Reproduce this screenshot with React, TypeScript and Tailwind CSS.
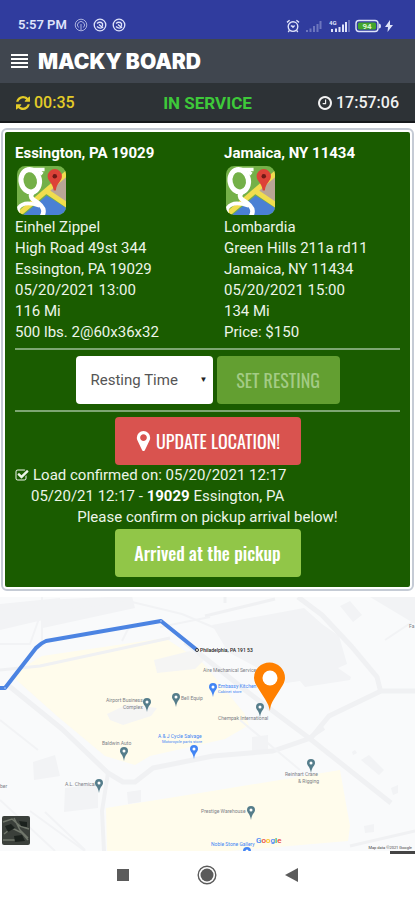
import React from 'react';

interface Stop {
    place: string;
    lines: string[];
}

const stops: Stop[] = [
    {
        place: 'Essington, PA 19029',
        lines: ['Einhel Zippel', 'High Road 49st 344', 'Essington, PA 19029', '05/20/2021 13:00', '116 Mi', '500 lbs. 2@60x36x32'],
    },
    {
        place: 'Jamaica, NY 11434',
        lines: ['Lombardia', 'Green Hills 211a rd11', 'Jamaica, NY 11434', '05/20/2021 15:00', '134 Mi', 'Price: $150'],
    },
];

const ICONS = {
    refresh: 'M1511 1056q0 5-1 7-64 268-268 434.5t-478 166.5q-146 0-282.5-55t-243.5-157l-129 129q-19 19-45 19t-45-19-19-45v-448q0-26 19-45t45-19h448q26 0 45 19t19 45-19 45l-137 137q71 66 161 102t187 36q134 0 250-65t186-179q11-17 53-117 8-23 30-23h192q13 0 22.5 9.5t9.5 22.5zm25-800v448q0 26-19 45t-45 19h-448q-26 0-45-19t-19-45 19-45l138-138q-148-137-349-137-134 0-250 65t-186 179q-11 17-53 117-8 23-30 23h-199q-13 0-22.5-9.5t-9.5-22.5v-7q65-268 270-434.5t480-166.5q146 0 284 55.5t245 156.5l130-129q19-19 45-19t45 19 19 45z',
    clock: 'M896 544v448q0 14-9 23t-23 9h-320q-14 0-23-9t-9-23v-64q0-14 9-23t23-9h224v-352q0-14 9-23t23-9h64q14 0 23 9t9 23zm416 352q0-148-73-273t-198-198-273-73-273 73-198 198-73 273 73 273 198 198 273 73 273-73 198-198 73-273zm224 0q0 209-103 385.5t-279.5 279.5-385.5 103-385.5-103-279.5-279.5-103-385.5 103-385.5 279.5-279.5 385.5-103 385.5 103 279.5 279.5 103 385.5z',
    marker: 'M1152 640q0-106-75-181t-181-75-181 75-75 181 75 181 181 75 181-75 75-181zm256 0q0 109-33 179l-364 774q-16 33-47.5 52t-67.5 19-67.5-19-46.5-52l-365-774q-33-70-33-179 0-212 150-362t362-150 362 150 150 362z',
    check: 'M1472 930v318q0 119-84.5 203.5t-203.5 84.5h-832q-119 0-203.5-84.5t-84.5-203.5v-832q0-119 84.5-203.5t203.5-84.5h832q63 0 117 25 15 7 18 23 3 17-9 29l-49 49q-10 10-23 10-3 0-9-2-23-6-45-6h-832q-66 0-113 47t-47 113v832q0 66 47 113t113 47h832q66 0 113-47t47-113v-254q0-13 9-22l64-64q10-10 23-10 6 0 12 3 20 8 20 29zm231-489l-814 814q-24 24-57 24t-57-24l-430-430q-24-24-24-57t24-57l110-110q24-24 57-24t57 24l263 263 647-647q24-24 57-24t57 24l110 110q24 24 24 57t-24 57z',
};

const Icon: React.FC<{ d: string; box: string; className: string }> = ({ d, box, className }) => (
    <svg viewBox={box} className={className} fill="currentColor" aria-hidden="true">
        <path d={d} />
    </svg>
);

const StatusBar: React.FC = () => (
    <div className="flex h-[39px] items-end justify-between bg-[#303c9e] pr-[22px] pb-[5px] pl-[18px] text-[#dfe3fa]">
        <div className="flex items-center gap-[5px]">
            <span className="text-[13px] leading-[18px] font-semibold">5:57 PM</span>
            <svg viewBox="0 0 14 14" className="ml-[2px] h-[14px] w-[14px]" fill="none" stroke="currentColor" opacity=".7">
                <circle cx="7" cy="7" r="5.8" />
                <path d="M4.5 9.5a3.5 3.5 0 1 1 5 0M7 6v6" />
            </svg>
            {[0, 1].map(i => (
                <svg key={i} viewBox="0 0 14 14" className="h-[14px] w-[14px]" fill="none" stroke="currentColor" strokeWidth="1.3">
                    <circle cx="7" cy="7" r="5.8" />
                    <path d="M4 5.500q3-2.500 5.500 0v3M4 8.500q2.500 2.500 5.500 1L6 6.500" />
                </svg>
            ))}
        </div>
        <div className="flex items-center gap-[5px] pb-[1px]">
            <svg viewBox="0 0 14 14" className="h-[14px] w-[14px]" fill="none" stroke="currentColor" strokeWidth="1.4">
                <circle cx="7" cy="7.6" r="4.8" />
                <path d="M1 3.4 3.6 1.3M13 3.4l-2.6-2.1M3.4 11.4 2.2 13M10.6 11.4 11.8 13M4.8 7H6l1 1.2L8.6 6.600" />
            </svg>
            <svg viewBox="0 0 17 13" className="h-[13px] w-[17px]" fill="currentColor" opacity=".35">
                <path d="M1 10h2v2H1zM4.500 8.500h2V12h-2zM8 6h2v6H8zM11.500 4h2v8h-2zM14.500 1h2v8h-2z" />
            </svg>
            <svg viewBox="0 0 21 14" className="ml-[2px] h-[14px] w-[21px]">
                <path fill="currentColor" d="M2 10h2v3H2zM6 9.500h2V13H6zM9.500 8h2v5h-2zM13 5.500h2V13h-2zM16 3h2v10h-2z" />
                <path fill="currentColor" opacity=".3" d="M19 1h2v12h-2z" />
                <text x="0" y="6" fontSize="6" fontWeight="700" fill="currentColor">4G</text>
            </svg>
            <svg viewBox="0 0 27 14" className="h-[14px] w-[27px]">
                <rect x="1" y="1.500" width="22" height="11" rx="3" fill="none" stroke="currentColor" strokeWidth="1.400" />
                <path d="M24 4.500q2 0 2 2.500t-2 2.500z" fill="currentColor" />
                <rect x="3" y="3.500" width="18" height="7" rx="1.500" fill="#43a52c" />
                <text x="12" y="9.800" fontSize="8" fontWeight="700" fill="#d6f3cc" textAnchor="middle">94</text>
            </svg>
            <svg viewBox="0 0 8 12" className="-ml-[2px] h-[12px] w-[8px]" fill="currentColor">
                <path d="M5 0 0 7h3L2.500 12 8 5H5z" />
            </svg>
        </div>
    </div>
);

const MapsLogo: React.FC<{ id: string }> = ({ id }) => (
    <svg viewBox="0 0 48 48" className="mx-[2px] h-[49px] w-[49px]" role="img" aria-label="Google Maps">
        <clipPath id={id}>
            <rect width="48" height="48" rx="8" />
        </clipPath>
        <g clipPath={`url(#${id})`}>
            <path fill="#74b048" d="M0 0h48v48H0z" />
            <path fill="#b9a695" d="M48 9v30L30 24z" />
            <path fill="#4a80d4" d="M6 48 29 29l19 12v7z" />
            <path fill="none" stroke="#f0dd4e" strokeWidth="5" d="M2 47 50 6M28 24l22 15" />
            <g fill="none" stroke="#fff">
                <ellipse cx="13" cy="14.500" rx="9" ry="11" strokeWidth="5" transform="rotate(-12 13 14.500)" />
                <path strokeWidth="3.500" d="M10 3.500h17M21 5l4 3" />
                <path strokeWidth="4.500" d="M17 25q-6 4-1 8 10 6 10 11 0 3-2 6" />
                <path strokeWidth="3.500" d="M22 39Q6 33 1 42v6" />
            </g>
            <path fill="#dd4238" d="M37 3a7 7 0 0 1 7 7c0 5-5 6-6 14h-2c-1-8-6-9-6-14a7 7 0 0 1 7-7z" />
            <circle cx="37" cy="10" r="2.200" fill="#6d1916" />
        </g>
    </svg>
);

const Pin: React.FC<{ x: number; y: number; color?: string }> = ({ x, y, color = '#557d8b' }) => (
    <g transform={`translate(${x} ${y})`}>
        <path fill={color} d="M0 6C-1-1-4-1-4-4a4 4 0 0 1 8 0c0 3-3 3-4 10z" />
        <circle cy="-4" r="1.500" fill="#fff" />
    </g>
);

const RouteMap: React.FC = () => (
    <svg viewBox="0 597 415 254" className="block w-full bg-[#f9fafb]" role="img" aria-label="Route map">
        {/* blocks */}
        <g fill="#f2f3f5">
            <path d="M212 625 304 608l18 16 17 12 8 28-9 4 13 9-1 3-45 7-5-6-14 2-58-31z" />
            <path d="M340 606l10-5 12 14-9 7zM370 597h45v27zM33 762l22-7 5 21-26 4zM65 788l33-4v24l-34 4zM127 792l14-2v12l-13 2zM252 737l16-2v16l-16 2z" />
            <path d="M0 604 60 598v18L0 630zM42 600l90-4 3 12-92 20z" />
            <path d="M361 760l8-5 15 15-5 5zM352 752l3-2 2 3-4 2zM391 788l7-3v8l-5 2zM364 826l10-2v8l-9 1z" />
        </g>
        {/* commercial areas */}
        <path fill="#fffcec" d="M29 664 42 656 165 638l20 13 18 12 18 22 23 28 5 12-24 14-75 17-15 9-30-9-48-40-45-40z" />
        <path fill="#fffcec" d="M106 808 200 793 340 770l10 56-2 15-118 10H107z" />
        <path fill="#f5f5f4" d="M154 660 190 651l15 8-10 10-38 4zM107 714 128 704l29 4-6 8-28 9-13-5z" />
        {/* roads */}
        <g fill="none" stroke="#f0f1f3" strokeWidth="5" strokeLinejoin="round">
            <path d="M9 686 62 729 108 773l15 9h12l18-14 60-12 60-5 38-13 18-22 52-25h34" />
            <path d="M185 642 245 690l64 48 82 65" />
            <path d="M298 597l24 18 30 32 25 30 4 16" />
            <path d="M108 773l-6 38 2 40M309 738l15-10" strokeWidth="4" />
            <path d="M205 616l70-17M225 603V597M0 670l40-4 130-28M350 846l65-15" strokeWidth="3" />
        </g>
        <g fill="none" stroke="#f2f3f5" strokeWidth="2">
            <path d="M0 610 110 598M0 622 130 599M0 644h30l12-34M30 811l55 40M0 800l55 51M42 597v50M132 602l50 12 38 16M45 812l40 38M160 627l50-10M130 625l-8 16" />
            <path d="M385 640l30-20M240 720l60 50M0 720l38 30" />
        </g>

        <path fill="none" stroke="#4c84e2" strokeWidth="4" strokeLinejoin="round" d="M0 688h5L36 648q5-5 10-7L161 621l36 29" />
        <circle cx="161" cy="621" r="1" fill="#8fb2ef" />
        <circle cx="5" cy="688" r="1" fill="#8fb2ef" />
        <circle cx="197" cy="650" r="1.500" fill="#fff" stroke="#333" />

        <g fontSize="5" fill="#7d8187">
            <text x="200" y="652" fill="#222" fontWeight="500">Philadelphia, PA 191 53</text>
            <text x="203" y="672">Aire Mechanical Services</text>
            <text x="106" y="702">Airport Business</text>
            <text x="123" y="709">Complex</text>
            <text x="181" y="700">Bell Equip</text>
            <text x="218" y="720">Chempak International</text>
            <text x="102" y="745">Baldwin Auto</text>
            <text x="65" y="786">A.L. Chemical</text>
            <text x="285" y="776">Reinhart Crane</text>
            <text x="298" y="783">&amp; Rigging</text>
            <text x="201" y="813">Prestige Warehouse</text>
            <text x="409" y="628">Fa</text>
            <text x="0" y="788">ber</text>
        </g>
        <g fontSize="5" fill="#4285f4">
            <text x="218" y="688">Embassy Kitchen</text>
            <text x="218" y="693" fontSize="4">Cabinet store</text>
            <text x="158" y="738">A &amp; J Cycle Salvage</text>
            <text x="162" y="743" fontSize="4">Motorcycle parts store</text>
            <text x="211" y="846">Noble Stone Gallery</text>
        </g>

        <Pin x={176} y={701} />
        <Pin x={147} y={706} />
        <Pin x={260} y={711} />
        <Pin x={124} y={755} />
        <Pin x={99} y={787} />
        <Pin x={311} y={767} />
        <Pin x={251} y={814} />
        <Pin x={213} y={691} color="#4285f4" />
        <Pin x={194} y={753} color="#4285f4" />
        <Pin x={247} y={855} color="#4285f4" />

        {/* truck position */}
        <path fill="#ff8000" d="M270 711q-1-6-5-12l-7-11q-4-6-4-10a15.500 15.500 0 0 1 31 0q0 4-4 10l-7 11q-4 6-4 12z" />
        <circle cx="270" cy="678" r="7.500" fill="#fff" />

        <text x="256" y="843" fontSize="8" fontWeight="500">
            <tspan fill="#4285f4">G</tspan><tspan fill="#ea4335">o</tspan><tspan fill="#fbbc05">o</tspan><tspan fill="#4285f4">g</tspan><tspan fill="#34a853">l</tspan><tspan fill="#ea4335">e</tspan>
        </text>
        <text x="412" y="849" fontSize="4" fill="#444" textAnchor="end">Map data ©2021 Google</text>

        {/* satellite toggle */}
        <rect x="2" y="816" width="28" height="29" rx="2" fill="#3b403b" />
        <path d="M3 822l9-3 8 7 9 3M4 834l8-6 10 5 6 7M3 840h17M14 818l6 12 8 8" fill="none" stroke="#70766b" strokeWidth="1.500" />
        <path d="M5 826l6-2 4 4-7 4zM19 821l8 1v5l-6-1zM14 836l8-1 3 6-10 1z" fill="#1b211d" />
    </svg>
);

const App: React.FC = () => {
    const buttonBase = "h-12 rounded-[4px] px-4 font-['Oswald','Roboto_Condensed','Liberation_Sans_Narrow',sans-serif] text-[18px] leading-6";

    return (
        <div className="min-h-screen bg-white font-['Roboto',sans-serif]">
            <StatusBar />
            <header className="flex h-11 items-center gap-[10px] bg-[#40464f] px-[11px] text-white">
                <button aria-label="Menu" className="flex w-[17px] flex-col gap-[2px]">
                    <span className="h-[2px] w-full bg-white" />
                    <span className="h-[2px] w-full bg-white" />
                    <span className="h-[2px] w-full bg-white" />
                    <span className="h-[2px] w-full bg-white" />
                </button>
                <h1 className="pt-[2px] font-['Inter',sans-serif] text-[21px] leading-7 font-black">MACKY BOARD</h1>
            </header>
            <div className="grid h-10 grid-cols-[1fr_auto_1fr] items-center border-b-2 border-[#16191c] bg-[#2d3236] px-4 pt-[2px] text-[16px] leading-6 font-medium">
                <span className="flex items-center text-[#e3cb28]">
                    <Icon d={ICONS.refresh} box="0 128 1536 1536" className="mr-1 h-[14px] w-[14px]" />
                    00:35
                </span>
                <span className="text-[17px] font-bold text-[#3ec93a]">IN SERVICE</span>
                <span className="flex items-center justify-end text-[#f1f1f1]">
                    <Icon d={ICONS.clock} box="0 128 1536 1536" className="mr-1 h-[14px] w-[14px]" />
                    17:57:06
                </span>
            </div>

            <main className="pt-[5px]">
                <section className="mx-px rounded-[6px] border-2 border-[#c5cbd5] bg-white p-[2px]">
                    <div className="rounded-[2px] bg-[#1a5c00] px-[10px] pt-[11px] pb-[10px] text-[15px] leading-[21px] text-[#edf5e9]">
                        <div className="grid grid-cols-[209fr_176fr]">
                            {stops.map(stop => (
                                <div key={stop.place}>
                                    <h2 className="font-bold text-white">{stop.place}</h2>
                                    <div className="py-[2px]">
                                        <MapsLogo id={stop.place.slice(0, 5)} />
                                    </div>
                                    {stop.lines.map(line => (
                                        <p key={line}>{line}</p>
                                    ))}
                                </div>
                            ))}
                        </div>
                        <hr className="mt-[5px] border-t-2 border-[#7da672]" />
                        <div className="mt-[6px] flex justify-center gap-1">
                            <div className="relative">
                                <select aria-label="Resting Time" className="h-12 w-[137px] appearance-none rounded-[4px] bg-white px-[15px] text-[15px] text-[#555]">
                                    <option>Resting Time</option>
                                </select>
                                <span className="pointer-events-none absolute top-[13px] right-[5px] text-[8px] text-[#222]">▼</span>
                            </div>
                            <button disabled className={`${buttonBase} w-[123px] bg-[#639f31] text-[#a3cb85]`}>SET RESTING</button>
                        </div>
                        <hr className="mt-[6px] border-t-2 border-[#7da672]" />
                        <div className="mt-[5px] flex justify-center">
                            <button className={`${buttonBase} flex w-[186px] items-center justify-center gap-1 bg-[#d9534f] text-white`}>
                                <Icon d={ICONS.marker} box="256 128 1280 1536" className="h-5 w-[17px]" />
                                UPDATE LOCATION!
                            </button>
                        </div>
                        <p className="flex items-center">
                            <Icon d={ICONS.check} box="0 128 1792 1536" className="mr-1 h-[13px] w-[14px]" />
                            Load confirmed on: 05/20/2021 12:17
                        </p>
                        <p className="pl-4">05/20/21 12:17 - <b className="text-white">19029</b> Essington, PA</p>
                        <p className="text-center">Please confirm on pickup arrival below!</p>
                        <div className="mt-px flex justify-center">
                            <button className={`${buttonBase} w-[186px] bg-[#91c648] font-medium text-white`}>Arrived at the pickup</button>
                        </div>
                    </div>
                </section>
                <div className="pt-[6px]">
                    <RouteMap />
                </div>
            </main>

            <nav className="relative flex h-[48px] items-center justify-center gap-[68px] bg-white text-[#5b5b5b]">
                <span className="absolute top-0 right-0 h-[3px] w-[25px] bg-[#444]" />
                <button aria-label="Recent apps" className="h-3 w-3 bg-[#5b5b5b]" />
                <button aria-label="Home">
                    <svg viewBox="0 0 20 20" className="h-5 w-5">
                        <circle cx="10" cy="10" r="8.800" fill="none" stroke="currentColor" strokeWidth="1.400" />
                        <circle cx="10" cy="10" r="6.500" fill="currentColor" />
                    </svg>
                </button>
                <button aria-label="Back">
                    <svg viewBox="0 0 13 14" className="h-[14px] w-[13px]" fill="currentColor">
                        <path d="M0 7 13 0v14z" />
                    </svg>
                </button>
            </nav>
        </div>
    );
};

export default App;
